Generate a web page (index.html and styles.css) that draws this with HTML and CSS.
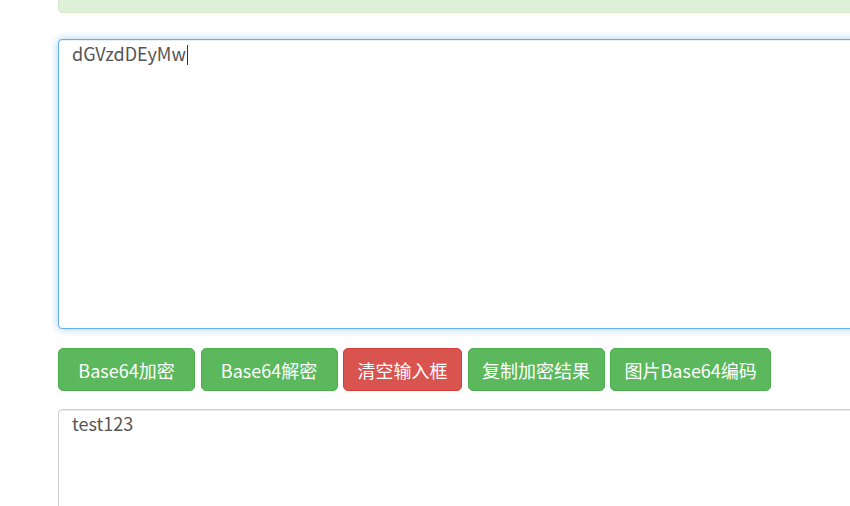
FILE: index.html
```html
<!DOCTYPE html>
<html lang="zh-CN">

<head>
  <meta charset="UTF-8">
  <meta name="viewport" content="width=device-width, initial-scale=1.0">
  <title>Base64加密解密</title>
  <link rel="stylesheet" href="styles.css">
</head>

<body>
  <main class="tool">
    <div class="alert"></div>

    <div class="box box-focus">dGVzdDEyMw<span class="caret"></span></div>

    <div class="actions">
      <button type="button" class="btn btn-ok">Base64加密</button>
      <button type="button" class="btn btn-ok">Base64解密</button>
      <button type="button" class="btn btn-danger">清空输入框</button>
      <button type="button" class="btn btn-ok">复制加密结果</button>
      <button type="button" class="btn btn-ok">图片Base64编码</button>
    </div>

    <div class="box box-result">test123</div>
  </main>
</body>

</html>
```

FILE: styles.css
```css
html,
body {
  margin: 0;
  overflow: hidden;
  background: #fff;
}

body {
  font-family: "Noto Sans CJK SC", "Noto Sans", sans-serif;
  font-size: 18px;
  color: #555;
}

.tool {
  width: 1100px;
  margin-left: 58px;
}

.alert {
  height: 52px;
  margin-top: -41px;
  background: #dff0d8;
  border: 1px solid #d6e9c6;
  border-radius: 4px;
}

.box {
  box-sizing: border-box;
  padding: 0 13px;
  line-height: 26px;
  border: 1px solid #ccc;
  border-radius: 4px;
  box-shadow: inset 0 1px 1px rgba(0, 0, 0, .075);
  background: #fff;
}

.box-focus {
  height: 290px;
  margin-top: 26px;
  border-color: #66afe9;
  box-shadow: inset 0 1px 1px rgba(0, 0, 0, .075), 0 0 8px rgba(102, 175, 233, .6);
}

.caret {
  display: inline-block;
  width: 1px;
  height: 20px;
  margin-left: 1px;
  vertical-align: -4px;
  background: #333;
}

.box-result {
  height: 140px;
}

.actions {
  display: flex;
  gap: 5.5px;
  margin: 19px 0 18px;
}

.btn {
  min-width: 137px;
  height: 43px;
  padding: 0 13.5px;
  font-family: inherit;
  font-size: 18px;
  color: #fff;
  border: 1px solid;
  border-radius: 5px;
  cursor: pointer;
}

.btn-ok {
  background: #5cb85c;
  border-color: #4cae4c;
}

.btn-danger {
  min-width: 0;
  background: #d9534f;
  border-color: #d43f3a;
}
```
